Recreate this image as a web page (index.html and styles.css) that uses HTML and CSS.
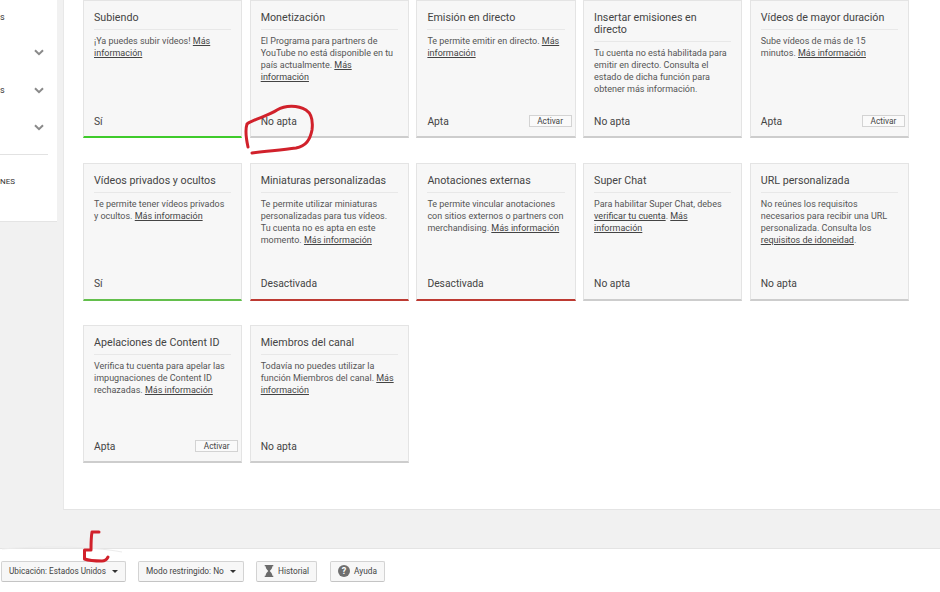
FILE: index.html
```html
<!DOCTYPE html>
<html lang="es">
<head>
<meta charset="utf-8">
<title>Estado y funciones</title>
<link rel="stylesheet" href="styles.css">
</head>
<body>
<div class="top">
  <aside class="side">
    <div class="side-item side-first"><span>s</span></div>
    <div class="side-item side-chev"><span></span><svg class="chev" viewBox="0 0 10 7"><path d="M1 1.2 5 5.2 9 1.2" /></svg></div>
    <div class="side-item side-chev"><span>s</span><svg class="chev" viewBox="0 0 10 7"><path d="M1 1.2 5 5.2 9 1.2" /></svg></div>
    <div class="side-item side-chev"><span></span><svg class="chev" viewBox="0 0 10 7"><path d="M1 1.2 5 5.2 9 1.2" /></svg></div>
    <div class="side-rule"></div>
    <div class="side-caps">NES</div>
  </aside>
  <main class="main">
    <section class="grid">
      <article class="card ok">
        <h3>Subiendo</h3>
        <p>¡Ya puedes subir vídeos! <a>Más información</a></p>
        <div class="status">Sí</div>
      </article>
      <article class="card">
        <h3>Monetización</h3>
        <p>El Programa para partners de YouTube no está disponible en tu país actualmente. <a>Más información</a></p>
        <div class="status">No apta</div>
      </article>
      <article class="card">
        <h3>Emisión en directo</h3>
        <p>Te permite emitir en directo. <a>Más información</a></p>
        <div class="status">Apta<button class="activate">Activar</button></div>
      </article>
      <article class="card">
        <h3>Insertar emisiones en directo</h3>
        <p>Tu cuenta no está habilitada para emitir en directo. Consulta el estado de dicha función para obtener más información.</p>
        <div class="status">No apta</div>
      </article>
      <article class="card">
        <h3>Vídeos de mayor duración</h3>
        <p>Sube vídeos de más de 15 minutos. <a>Más información</a></p>
        <div class="status">Apta<button class="activate">Activar</button></div>
      </article>

      <article class="card ok2">
        <h3>Vídeos privados y ocultos</h3>
        <p>Te permite tener vídeos privados y ocultos. <a>Más información</a></p>
        <div class="status">Sí</div>
      </article>
      <article class="card off">
        <h3>Miniaturas personalizadas</h3>
        <p>Te permite utilizar miniaturas personalizadas para tus vídeos. Tu cuenta no es apta en este momento. <a>Más información</a></p>
        <div class="status">Desactivada</div>
      </article>
      <article class="card off">
        <h3>Anotaciones externas</h3>
        <p>Te permite vincular anotaciones con sitios externos o partners con merchandising. <a>Más información</a></p>
        <div class="status">Desactivada</div>
      </article>
      <article class="card">
        <h3>Super Chat</h3>
        <p>Para habilitar Super Chat, debes <a>verificar tu cuenta</a>. <a>Más información</a></p>
        <div class="status">No apta</div>
      </article>
      <article class="card">
        <h3>URL personalizada</h3>
        <p>No reúnes los requisitos necesarios para recibir una URL personalizada. Consulta los <a>requisitos de idoneidad</a>.</p>
        <div class="status">No apta</div>
      </article>

      <article class="card">
        <h3>Apelaciones de Content ID</h3>
        <p>Verifica tu cuenta para apelar las impugnaciones de Content ID rechazadas. <a>Más información</a></p>
        <div class="status">Apta<button class="activate">Activar</button></div>
      </article>
      <article class="card">
        <h3>Miembros del canal</h3>
        <p>Todavía no puedes utilizar la función Miembros del canal. <a>Más información</a></p>
        <div class="status">No apta</div>
      </article>
    </section>
  </main>
</div>
<footer class="foot">
  <button class="fbtn fbtn-loc">Ubicación: Estados Unidos<span class="caret"></span></button>
  <button class="fbtn fbtn-mode">Modo restringido: No<span class="caret"></span></button>
  <button class="fbtn fbtn-hist"><svg class="ico" viewBox="0 0 10 14"><path d="M0 0h10v1.5H9C8.8 4.5 6.6 6 5.9 7c.7 1 2.9 2.5 3.1 5.500h1V14H0v-1.500h1C1.200 9.500 3.400 8 4.100 7 3.400 6 1.200 4.500 1 1.500H0z"/></svg>Historial</button>
  <button class="fbtn fbtn-help"><svg class="ico-help" viewBox="0 0 12 12"><circle cx="6" cy="6" r="6"/><text x="6" y="9.200" text-anchor="middle">?</text></svg>Ayuda</button>
</footer>
<svg class="marks" viewBox="0 0 940 592">
  <path class="arc" d="M2 549C40 546 90 546 122 552"/>
  <path class="pen" d="M248 147C246 138 245 130 247 124C254 119 268 116 277 110C285 105 298 105 306 110C312 114 313 122 312 130C310 140 306 146 296 148C282 150 268 151 252 153"/>
  <path class="pen" d="M99 532H92C91 538 91 544 91 550H84.500V559C90 561 98 561 102 561C105 561 107 559 108 557"/>
</svg>
</body>
</html>
```
FILE: styles.css
```css
* { box-sizing: border-box; }
html, body { margin: 0; height: 592px; overflow: hidden; }
body {
  background: #f1f1f1;
  font-family: Roboto, "Liberation Sans", sans-serif;
  color: #333;
  position: relative;
}
.top { display: flex; height: 510px; }
.side {
  width: 57px;
  height: 222px;
  background: #fff;
  border-bottom: 1px solid #e4e4e4;
  padding-top: 11px;
  flex: none;
  margin-right: 6px;
}
.side-item {
  display: flex;
  justify-content: space-between;
  align-items: center;
  height: 12px;
  font-size: 9px;
  color: #333;
  padding-right: 13px;
}
.side-first { margin-bottom: 23.500px; }
.side-chev { margin-bottom: 25.500px; }
.chev { width: 10px; height: 7px; fill: none; stroke: #8a8a8a; stroke-width: 2; }
.side-rule { height: 1px; background: #e2e2e2; width: 48px; margin-top: -5.500px; }
.side-caps { font-size: 8px; margin-top: 22px; line-height: 10px; color: #333; }
.main {
  flex: 1;
  background: #fff;
  border-bottom: 1px solid #e4e4e4;
  border-left: 1px solid #e8e8e8;
  padding-left: 19px;
}
.grid {
  display: grid;
  grid-template-columns: repeat(5, 159.200px);
  column-gap: 7.500px;
  grid-auto-rows: 138px;
  row-gap: 24.500px;
}
.card {
  display: flex;
  flex-direction: column;
  background: #f7f7f7;
  border: 1px solid #e4e4e4;
  border-bottom: 2px solid #cdcdcd;
  padding: 11px 10px 0 10px;
}
.card.ok { border-bottom: 2px solid #3fcb2b; }
.card.ok2 { border-bottom: 2px solid #63bf4c; }
.card.off { border-bottom: 2px solid #bd3a32; }
.card h3 {
  margin: 0;
  font-weight: 400;
  font-size: 10.700px;
  line-height: 12px;
  color: #444;
  padding-bottom: 5px;
  border-bottom: 1px solid #e8e8e8;
}
.card p {
  margin: 5px 0 0;
  padding-right: 1px;
  font-size: 9px;
  line-height: 12px;
  color: #555;
  flex: 1;
}
.card a { color: #444; text-decoration: underline; }
.status {
  display: flex;
  justify-content: space-between;
  align-items: center;
  height: 14px;
  margin-bottom: 8px;
  font-size: 10.300px;
  color: #444;
}
.activate {
  width: 43px;
  height: 12px;
  margin-right: -7px;
  padding: 0;
  background: #fafafa;
  border: 1px solid #d3d3d3;
  font: 8.300px/10px Roboto, "Liberation Sans", sans-serif;
  color: #444;
}
.foot {
  display: flex;
  align-items: center;
  gap: 12px;
  margin-top: 38px;
  height: 44px;
  padding: 1px 0 0 1px;
  background: #fff;
  border-top: 1px solid #e4e4e4;
}
.fbtn {
  display: inline-flex;
  align-items: center;
  justify-content: space-between;
  height: 21px;
  padding: 0 7px;
  background: #f7f7f7;
  border: 1px solid #d3d3d3;
  border-bottom-color: #c4c4c4;
  border-radius: 2px;
  font: 8.300px/10px Roboto, "Liberation Sans", sans-serif;
  color: #444;
  white-space: nowrap;
}
.fbtn-loc { width: 125px; font-size: 8.200px; }
.fbtn-mode { width: 106px; }
.fbtn-hist { width: 61px; }
.fbtn-help { width: 55px; margin-left: 1px; }
.caret {
  width: 0;
  height: 0;
  border-left: 3.500px solid transparent;
  border-right: 3.500px solid transparent;
  border-top: 3.500px solid #333;
  margin-left: 6px;
}
.ico { width: 10px; height: 12px; fill: #6b6b6b; }
.ico-help { width: 12px; height: 12px; }
.ico-help circle { fill: #6f6f6f; }
.ico-help text { fill: #fff; font: 700 9px Roboto, sans-serif; }
.marks { position: absolute; left: 0; top: 0; width: 940px; height: 592px; pointer-events: none; }
.pen { fill: none; stroke: #d1212b; stroke-width: 3; stroke-linecap: round; stroke-linejoin: round; }
.arc { fill: none; stroke: #ececec; stroke-width: 1; }
```
